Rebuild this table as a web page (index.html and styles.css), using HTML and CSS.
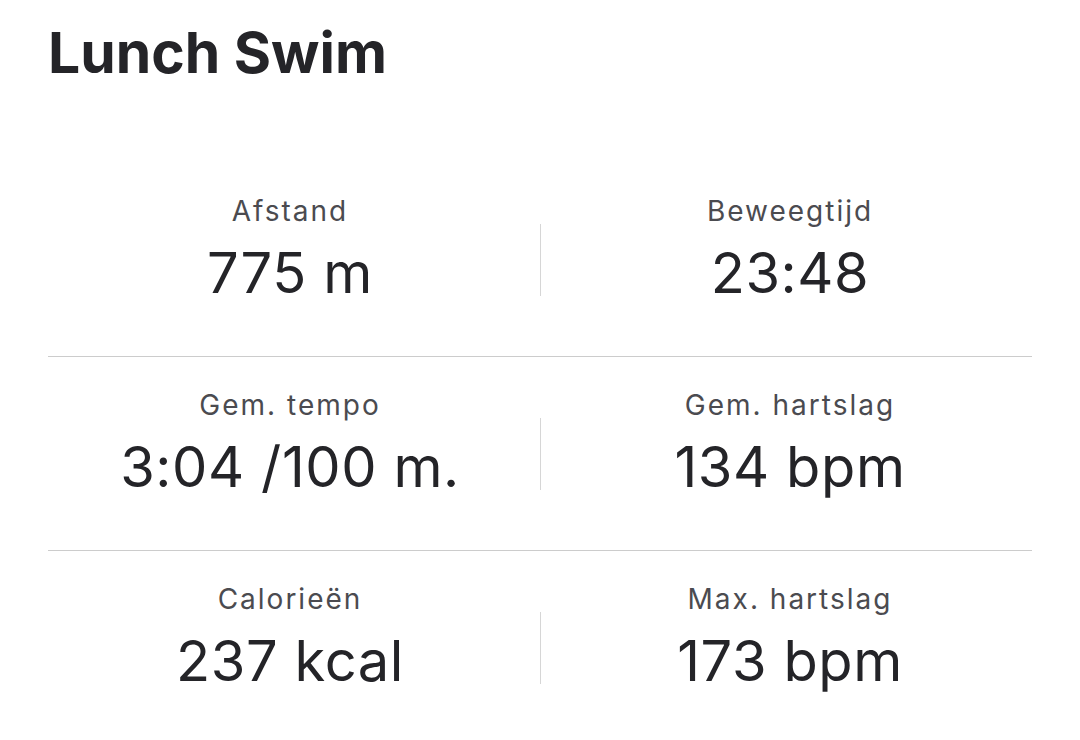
FILE: index.html
```html
<!DOCTYPE html>
<html lang="nl">
<head>
<meta charset="utf-8">
<link rel="stylesheet" href="styles.css">
</head>
<body>
<main class="page">
  <h1 class="title">Lunch Swim</h1>
  <section class="stats">
    <div class="row">
      <div class="cell"><div class="label">Afstand</div><div class="value">775 m</div></div>
      <div class="sep"></div>
      <div class="cell"><div class="label">Beweegtijd</div><div class="value">23:48</div></div>
    </div>
    <div class="row">
      <div class="cell"><div class="label">Gem. tempo</div><div class="value">3:04 /100 m.</div></div>
      <div class="sep"></div>
      <div class="cell"><div class="label">Gem. hartslag</div><div class="value">134 bpm</div></div>
    </div>
    <div class="row">
      <div class="cell"><div class="label">Calorieën</div><div class="value">237 kcal</div></div>
      <div class="sep"></div>
      <div class="cell"><div class="label">Max. hartslag</div><div class="value">173 bpm</div></div>
    </div>
  </section>
</main>
</body>
</html>
```

FILE: styles.css
```css
html, body {
  margin: 0;
  padding: 0;
  background: #ffffff;
}
body {
  font-family: Inter, "Noto Sans", "Liberation Sans", sans-serif;
  color: #242428;
}
.page {
  padding: 21px 48px 0 48px;
}
.title {
  margin: 0;
  font-size: 57px;
  font-weight: 700;
  line-height: 64px;
  letter-spacing: 0;
  color: #242428;
}
.stats {
  margin-top: 78px;
}
.row {
  display: grid;
  grid-template-columns: 1fr 16px 1fr;
  align-items: start;
  height: 193px;
  border-bottom: 1px solid #cccccc;
}
.row:last-child {
  border-bottom: none;
}
.cell {
  display: flex;
  flex-direction: column;
  align-items: center;
  padding-top: 30px;
}
.sep {
  justify-self: center;
  width: 1px;
  height: 72px;
  background: #d6d6d6;
  margin-top: 61px;
}
.label {
  font-size: 28px;
  line-height: 36px;
  letter-spacing: 2px;
  color: #4b4b50;
}
.value {
  margin-top: 10px;
  font-size: 56px;
  line-height: 68px;
  letter-spacing: 0.6px;
  color: #242428;
}
```
